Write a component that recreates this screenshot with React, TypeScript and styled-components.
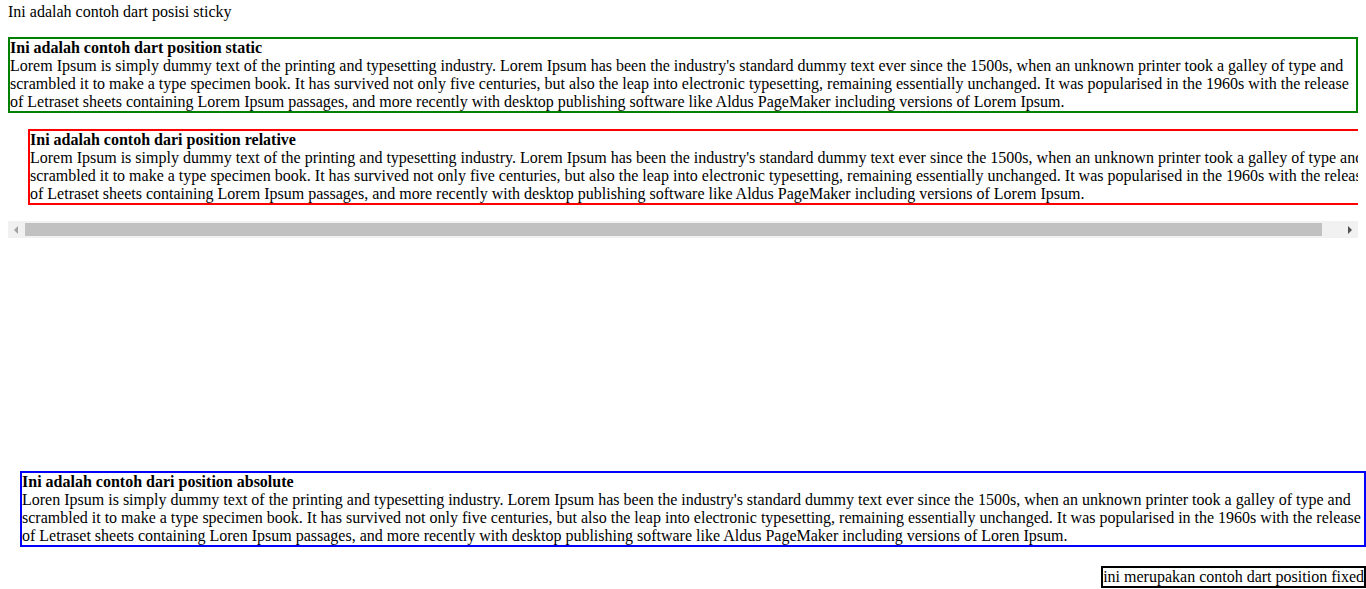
import React from "react";
import styled, { createGlobalStyle } from "styled-components";

const Global = createGlobalStyle`
  html, body { margin: 0; padding: 0; background: #fff; }
  body {
    font-family: "Liberation Serif", "Times New Roman", serif;
    font-size: 16px;
    line-height: 18px;
    color: #000;
  }
`;

const Page = styled.div`
  padding: 3px 8px 0;
  display: flow-root;
`;

const Sticky = styled.div`
  position: sticky;
  top: 0;
  background: #fff;
`;

const Box = styled.div<{ $color: string }>`
  border: 2px solid ${(p) => p.$color};
  box-sizing: border-box;
`;

const StaticBox = styled(Box)`
  margin-top: 16px;
  width: 100%;
`;

const ScrollArea = styled.div`
  margin-top: 16px;
  display: flex;
  flex-direction: column;
`;

const ScrollViewport = styled.div`
  overflow: hidden;
  padding-bottom: 16px;
`;

const RelativeBox = styled(Box)`
  position: relative;
  left: 20px;
  width: 100%;
`;

const ScrollBar = styled.div`
  display: flex;
  height: 17px;
  background: #f1f1f1;
`;

const ScrollButton = styled.div<{ $dir: "left" | "right"; $active: boolean }>`
  width: 17px;
  height: 17px;
  flex: none;
  display: flex;
  align-items: center;
  justify-content: center;

  &::before {
    content: "";
    width: 0;
    height: 0;
    border-top: 4px solid transparent;
    border-bottom: 4px solid transparent;
    ${(p) =>
      p.$dir === "left"
        ? `border-right: 4px solid ${p.$active ? "#505050" : "#a3a3a3"}; margin-right: 1px;`
        : `border-left: 4px solid ${p.$active ? "#505050" : "#a3a3a3"}; margin-left: 1px;`}
  }
`;

const Track = styled.div`
  flex: 1;
  display: flex;
  align-items: center;
`;

const Thumb = styled.div`
  height: 13px;
  width: calc(100% * 1350 / 1370);
  background: #c1c1c1;
`;

const AbsoluteBox = styled(Box)`
  margin: 233px -8px 0 12px;
`;

const Title = styled.b`
  display: block;
  font-weight: bold;
`;

const Body = styled.div``;

const FixedTag = styled.div`
  position: fixed;
  right: 0;
  bottom: 1px;
  border: 2px solid #000;
  background: #fff;
  white-space: nowrap;
`;

const lorem = (w: string) =>
  `${w} Ipsum is simply dummy text of the printing and typesetting industry. Lorem Ipsum has been the industry's standard dummy text ever since the 1500s, when an unknown printer took a galley of type and scrambled it to make a type specimen book. It has survived not only five centuries, but also the leap into electronic typesetting, remaining essentially unchanged. It was popularised in the 1960s with the release of Letraset sheets containing ${w} Ipsum passages, and more recently with desktop publishing software like Aldus PageMaker including versions of ${w} Ipsum.`;

export default function App() {
  return (
    <>
      <Global />
      <Page>
        <Sticky>Ini adalah contoh dart posisi sticky</Sticky>
        <StaticBox $color="#008000">
          <Title>Ini adalah contoh dart position static</Title>
          <Body>{lorem("Lorem")}</Body>
        </StaticBox>
        <ScrollArea>
          <ScrollViewport>
            <RelativeBox $color="#ff0000">
              <Title>Ini adalah contoh dari position relative</Title>
              <Body>{lorem("Lorem")}</Body>
            </RelativeBox>
          </ScrollViewport>
          <ScrollBar aria-hidden="true">
            <ScrollButton $dir="left" $active={false} />
            <Track>
              <Thumb />
            </Track>
            <ScrollButton $dir="right" $active={true} />
          </ScrollBar>
        </ScrollArea>
        <AbsoluteBox $color="#0000ff">
          <Title>Ini adalah contoh dari position absolute</Title>
          <Body>{lorem("Loren")}</Body>
        </AbsoluteBox>
      </Page>
      <FixedTag>ini merupakan contoh dart position fixed</FixedTag>
    </>
  );
}
